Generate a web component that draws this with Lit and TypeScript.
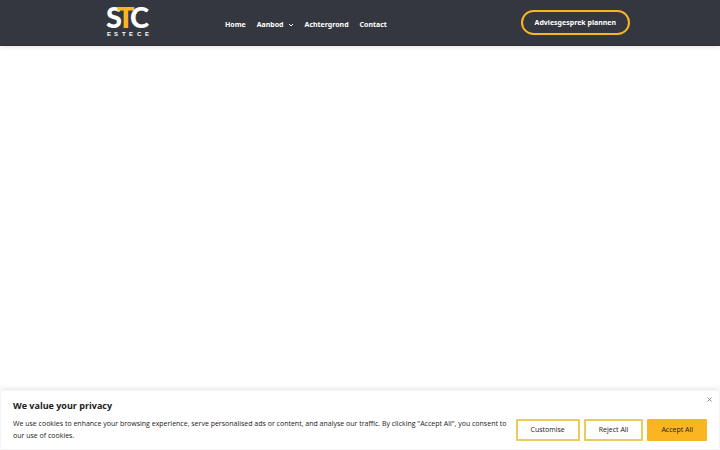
import { LitElement, html, css } from "lit";
import { customElement, state } from "lit/decorators.js";

@customElement("site-header")
class SiteHeader extends LitElement {
  static styles = css`
    :host { display: block; }
    header {
      box-sizing: border-box;
      min-height: 46px;
      padding: 0 90px 0 107px;
      display: flex;
      align-items: flex-start;
      background: #353740;
      border-bottom: 1px solid #2e3038;
      box-shadow: 0 1px 5px rgba(0, 0, 0, 0.12);
      font-family: "Noto Sans", "Open Sans", sans-serif;
      font-size: 7px;
      font-weight: 700;
      line-height: 12px;
    }
    a { color: #fff; text-decoration: none; }
    .logo { display: block; width: 43px; height: 38px; margin-right: 75px; }
    .logo svg { display: block; overflow: visible; }
    .word { font: 900 29px Lato, sans-serif; }
    .sub { font: 700 6px "Liberation Sans", sans-serif; }
    nav { display: flex; gap: 11px; padding-top: 19px; }
    .drop { display: flex; align-items: center; gap: 4px; }
    .cta {
      box-sizing: border-box;
      margin: 10px 0 0 auto;
      height: 25px;
      padding: 0 12px;
      border: 2px solid #fbb522;
      border-radius: 13px;
      line-height: 21px;
      white-space: nowrap;
    }
  `;
  render() {
    return html`<header>
      <a class="logo" href="#" aria-label="STC Estece">
        <svg width="43" height="38" viewBox="0 0 43 38" fill="#fff">
          <g class="word">
            <text x="-1" y="28">S</text>
            <text x="10" y="28" fill="#fbb522">T</text>
            <text x="23" y="28">C</text>
          </g>
          <g class="sub">
            <text x="0" y="36">E</text><text x="7" y="36">S</text>
            <text x="15" y="36">T</text><text x="22" y="36">E</text>
            <text x="30" y="36">C</text><text x="38" y="36">E</text>
          </g>
        </svg>
      </a>
      <nav>
        <a href="#">Home</a>
        <a class="drop" href="#">Aanbod
          <svg width="6" height="6" viewBox="0 0 6 6" fill="none" stroke="#fff"><path d="M1 2L3 4L5 2" /></svg>
        </a>
        <a href="#">Achtergrond</a>
        <a href="#">Contact</a>
      </nav>
      <a class="cta" href="#">Adviesgesprek plannen</a>
    </header>`;
  }
}

@customElement("cookie-banner")
class CookieBanner extends LitElement {
  static styles = css`
    :host { display: block; }
    section {
      position: relative;
      box-sizing: border-box;
      padding: 9px 12px 7px;
      background: #fff;
      border: 1px solid #f4f4f4;
      box-shadow: 0 -1px 5px rgba(0, 0, 0, 0.1);
      color: #212121;
      font-family: "Open Sans", sans-serif;
      font-size: 7px;
      line-height: 12px;
    }
    h2 { margin: 0 0 6px; font-size: 9px; line-height: 12px; font-weight: 700; }
    .row { display: flex; align-items: center; gap: 8px; }
    p { margin: 0; flex: 1; }
    .actions { display: flex; gap: 4px; }
    button { font: inherit; color: inherit; cursor: pointer; }
    .btn {
      height: 22px;
      padding: 0 13px;
      border: 2px solid #ecca5c;
      border-radius: 1px;
      background: #fff;
      white-space: nowrap;
    }
    .accept { padding: 0 12px; background: #fbb522; border-color: #fbb522; }
    .close {
      position: absolute;
      top: 5px;
      right: 6px;
      padding: 0;
      border: 0;
      background: none;
    }
    .close svg { display: block; }
  `;
  @state() private open = true;
  private dismiss = () => { this.open = false; };
  render() {
    if (!this.open) return null;
    return html`<section aria-label="Cookie consent">
      <button class="close" aria-label="Close" @click=${this.dismiss}>
        <svg width="7" height="7" viewBox="0 0 7 7" fill="none" stroke="#888"><path d="M1.5 1.5L5.5 5.5M5.5 1.5L1.5 5.5" /></svg>
      </button>
      <h2>We value your privacy</h2>
      <div class="row">
        <p>We use cookies to enhance your browsing experience, serve personalised ads or content, and analyse our traffic. By clicking "Accept All", you consent to our use of cookies.</p>
        <div class="actions">
          <button class="btn" @click=${this.dismiss}>Customise</button>
          <button class="btn" @click=${this.dismiss}>Reject All</button>
          <button class="btn accept" @click=${this.dismiss}>Accept All</button>
        </div>
      </div>
    </section>`;
  }
}

@customElement("app-root")
class AppRoot extends LitElement {
  static styles = css`
    :host { display: flex; flex-direction: column; min-height: 100vh; background: #fff; }
    main { flex: 1; }
  `;
  render() {
    return html`<site-header></site-header><main></main><cookie-banner></cookie-banner>`;
  }
}
